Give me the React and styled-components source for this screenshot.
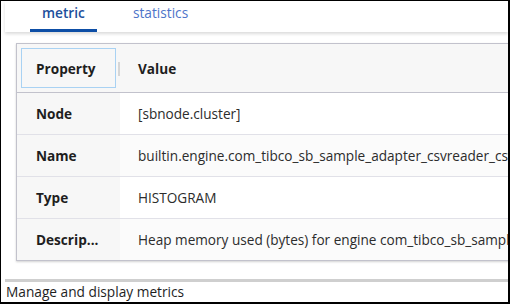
import React from 'react'
import styled, { createGlobalStyle } from 'styled-components'

const GlobalStyle = createGlobalStyle`
  html, body {
    margin: 0;
    padding: 0;
    background: #ffffff;
  }
  body {
    font-family: "Open Sans", "Noto Sans", sans-serif;
  }
`

const Frame = styled.div`
  width: 510px;
  height: 304px;
  box-sizing: border-box;
  border-style: solid;
  border-color: #000;
  border-width: 1px 2px 2px 1px;
  overflow: hidden;
  display: flex;
  flex-direction: column;
  padding-left: 4px;
  background: #fff;
`

const TabBar = styled.div`
  height: 31px;
  flex-shrink: 0;
  display: flex;
  padding-left: 25px;
  background: #fff;
  box-shadow: 0 2px 3px rgba(0, 0, 0, 0.14);
  position: relative;
  z-index: 1;
`

const Tab = styled.div`
  height: 31px;
  box-sizing: border-box;
  padding: 2px 12px 0;
  margin-right: 24px;
  font-size: 13.7px;
  font-weight: ${p => (p.$active ? 600 : 400)};
  color: ${p => (p.$active ? '#1d4f9c' : '#4d74c9')};
  border-bottom: 3px solid ${p => (p.$active ? '#0d4ea6' : 'transparent')};
`

const Content = styled.div`
  flex: 1;
  padding: 11px 0 0 11px;
  overflow: hidden;
`

const Table = styled.div`
  width: 620px;
  border-left: 1px solid #c2c2cc;
  border-top: 1px solid #c2c2cc;
  box-shadow: 0 1px 2px rgba(0, 0, 0, 0.18);
  border-bottom: 1px solid #c2c2cc;
`

const HeadRow = styled.div`
  display: flex;
  height: 48px;
  background: #f7f7f7;
  border-bottom: 1px solid #c2c2cc;
`

const HeadLabel = styled.div`
  width: 103px;
  flex-shrink: 0;
  padding: 4px;
  box-sizing: border-box;
  position: relative;
`

const FocusBox = styled.div`
  height: 100%;
  box-sizing: border-box;
  border: 1px solid #a9d2f3;
  display: flex;
  align-items: center;
  padding-left: 14px;
  font-size: 13.6px;
  font-weight: 700;
  color: #1e1e1e;
`

const Divider = styled.span`
  position: absolute;
  right: 0;
  top: 18px;
  width: 2px;
  height: 14px;
  background: #d6d6d6;
`

const HeadValue = styled.div`
  display: flex;
  align-items: center;
  padding-left: 18px;
  font-size: 13.6px;
  font-weight: 700;
  color: #1e1e1e;
`

const Row = styled.div`
  display: flex;
  height: 41px;
  border-bottom: ${p => (p.$last ? 'none' : '1px solid #e1e1e8')};
  background: ${p => (p.$alt ? '#fbfbfb' : '#ffffff')};
`

const Label = styled.div`
  width: 103px;
  flex-shrink: 0;
  box-sizing: border-box;
  padding-left: 19px;
  display: flex;
  align-items: center;
  background: #f7f7f7;
  font-size: 13.6px;
  font-weight: 700;
  color: #1e1e1e;
`

const Value = styled.div`
  display: flex;
  align-items: center;
  padding-left: 18px;
  font-size: 13.6px;
  color: #2c2c2c;
  white-space: nowrap;
`

const StatusBar = styled.div`
  flex-shrink: 0;
  border-top: 3px solid #cfcfcf;
  height: 23px;
  box-sizing: border-box;
  padding-left: 1px;
  font-size: 13.7px;
  color: #1e1e1e;
  line-height: 20px;
`

const rows = [
  { label: 'Node', value: '[sbnode.cluster]' },
  { label: 'Name', value: 'builtin.engine.com_tibco_sb_sample_adapter_csvreader_csvreader.heap' },
  { label: 'Type', value: 'HISTOGRAM' },
  { label: 'Descrip...', value: 'Heap memory used (bytes) for engine com_tibco_sb_sample_adapter_csvreader' },
]

const App = () => {
  return (
    <Frame>
      <GlobalStyle />
      <TabBar>
        <Tab $active>metric</Tab>
        <Tab>statistics</Tab>
      </TabBar>
      <Content>
        <Table>
          <HeadRow>
            <HeadLabel>
              <FocusBox>Property</FocusBox>
              <Divider />
            </HeadLabel>
            <HeadValue>Value</HeadValue>
          </HeadRow>
          {rows.map((r, i) => (
            <Row key={r.label} $alt={i % 2 === 1} $last={i === rows.length - 1}>
              <Label>{r.label}</Label>
              <Value>{r.value}</Value>
            </Row>
          ))}
        </Table>
      </Content>
      <StatusBar>Manage and display metrics</StatusBar>
    </Frame>
  )
}

export default App
